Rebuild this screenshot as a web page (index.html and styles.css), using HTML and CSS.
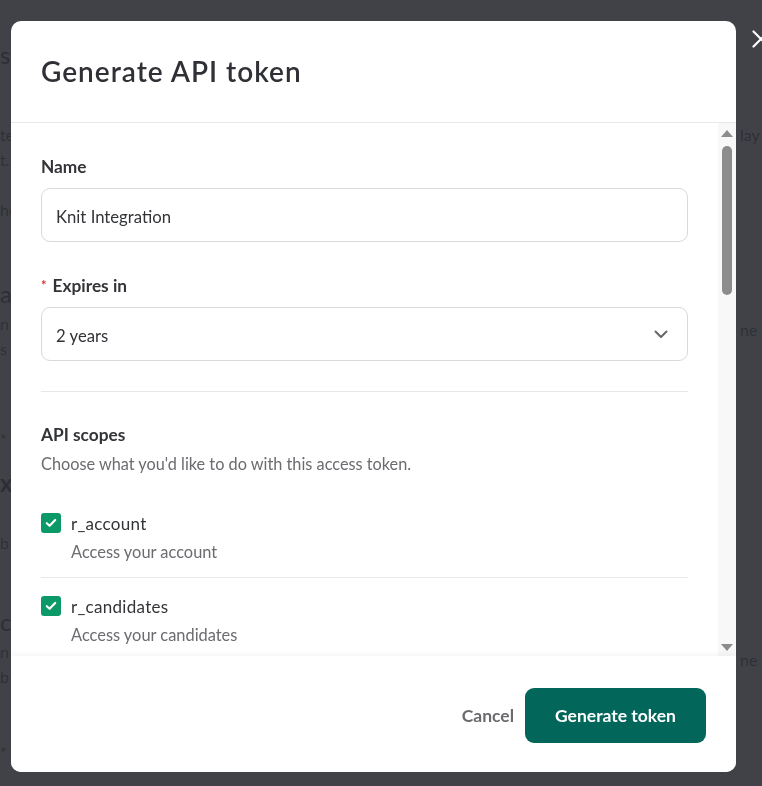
FILE: index.html
```html
<!DOCTYPE html>
<html lang="en">
<head>
<meta charset="utf-8">
<title>Generate API token</title>
<link rel="stylesheet" href="styles.css">
</head>
<body>
<div class="page">
  <div class="bg-col bg-left">
    <div class="bg-big bg-m40">ss</div>
    <div class="bg-t bg-m52">te</div>
    <div class="bg-t">t.</div>
    <div class="bg-t bg-m25">ho</div>
    <div class="bg-big bg-m57">a</div>
    <div class="bg-t bg-m2">n</div>
    <div class="bg-t">s</div>
    <div class="bg-t bg-m65">*</div>
    <div class="bg-big bg-bold bg-m17">xp</div>
    <div class="bg-t bg-m32">b</div>
    <div class="bg-big bg-m52">co</div>
    <div class="bg-t bg-m2">n</div>
    <div class="bg-t">b</div>
    <div class="bg-t bg-m50">*</div>
  </div>
  <div class="bg-col bg-right">
    <div class="bg-t bg-r1">lay</div>
    <div class="bg-t bg-r2">ne</div>
    <div class="bg-t bg-r3">ne</div>
  </div>
</div>

<div class="overlay">
  <button class="close" aria-label="Close">
    <svg width="18" height="18" viewBox="0 0 18 18"><path d="M1.5 1.5 L16.5 16.5 M16.5 1.5 L1.5 16.5" stroke="#fff" stroke-width="2.2" stroke-linecap="round" fill="none"/></svg>
  </button>
  <div class="modal">
    <header class="modal-header">
      <h1 class="modal-title">Generate API token</h1>
    </header>
    <div class="modal-body">
      <div class="scroll-content">
        <div class="field">
          <label class="label">Name</label>
          <div class="input">Knit Integration</div>
        </div>
        <div class="field">
          <label class="label"><span class="req">*</span>Expires in</label>
          <div class="input select">
            <span>2 years</span>
            <svg class="chev" width="14" height="9" viewBox="0 0 14 9"><path d="M1.5 1.5 L7 7 L12.5 1.5" stroke="#666" stroke-width="2" fill="none" stroke-linecap="round" stroke-linejoin="round"/></svg>
          </div>
        </div>
        <div class="divider"></div>
        <div class="scopes-head">
          <div class="label">API scopes</div>
          <div class="hint">Choose what you'd like to do with this access token.</div>
        </div>
        <div class="scope">
          <div class="scope-row">
            <span class="check"><svg width="12" height="10" viewBox="0 0 12 10"><path d="M1.8 5.2 L4.6 7.8 L10.2 2" stroke="#fff" stroke-width="2.2" fill="none" stroke-linecap="round" stroke-linejoin="round"/></svg></span>
            <span class="scope-name">r_account</span>
          </div>
          <div class="scope-desc">Access your account</div>
        </div>
        <div class="scope">
          <div class="scope-row">
            <span class="check"><svg width="12" height="10" viewBox="0 0 12 10"><path d="M1.8 5.2 L4.6 7.8 L10.2 2" stroke="#fff" stroke-width="2.2" fill="none" stroke-linecap="round" stroke-linejoin="round"/></svg></span>
            <span class="scope-name">r_candidates</span>
          </div>
          <div class="scope-desc">Access your candidates</div>
        </div>
      </div>
      <div class="scrollbar">
        <span class="arrow-up"></span>
        <span class="thumb"></span>
        <span class="track-fill"></span>
        <span class="arrow-down"></span>
      </div>
    </div>
    <footer class="modal-footer">
      <button class="btn-cancel">Cancel</button>
      <button class="btn-primary">Generate token</button>
    </footer>
  </div>
</div>
</body>
</html>
```

FILE: styles.css
```css
* { box-sizing: border-box; }
html, body { margin: 0; padding: 0; }
body {
  width: 762px;
  height: 786px;
  overflow: hidden;
  font-family: "Lato", "Liberation Sans", sans-serif;
  background: #ffffff;
  color: #333;
}

/* background page (dimmed) */
.page {
  display: flex;
  justify-content: space-between;
  height: 786px;
}
.bg-col { display: flex; flex-direction: column; }
.bg-left { padding-left: 0; }
.bg-right { width: 22px; padding-top: 122px; }
.bg-big { font-size: 24px; line-height: 30px; color: #333; }
.bg-bold { font-weight: 700; }
.bg-t { font-size: 16px; line-height: 25px; color: #444; }
.bg-m2 { margin-top: 2px; }
.bg-m17 { margin-top: 17px; }
.bg-m25 { margin-top: 25px; }
.bg-m32 { margin-top: 32px; }
.bg-m40 { margin-top: 40px; }
.bg-m50 { margin-top: 50px; }
.bg-m52 { margin-top: 52px; }
.bg-m57 { margin-top: 57px; }
.bg-m65 { margin-top: 65px; }
.bg-r1 { margin-bottom: 170px; }
.bg-r2 { margin-bottom: 305px; }

.overlay {
  position: fixed;
  inset: 0;
  background: rgba(44, 45, 52, 0.9);
  padding: 21px 26px 14px 11px;
}
.close {
  position: absolute;
  top: 30px;
  left: 752px;
  background: none;
  border: 0;
  padding: 0;
  line-height: 0;
}

.modal {
  width: 725px;
  height: 751px;
  background: #fff;
  border-radius: 10px;
  display: flex;
  flex-direction: column;
  overflow: hidden;
}
.modal-header {
  height: 102px;
  flex: none;
  border-bottom: 1px solid #e8e8e8;
  padding: 0 30px;
  display: flex;
  align-items: center;
}
.modal-title {
  margin: 0 0 1px;
  font-size: 28px;
  font-weight: 600;
  color: #303136;
  letter-spacing: 1px;
}

.modal-body {
  flex: 1;
  display: flex;
  min-height: 0;
}
.scroll-content {
  flex: 1;
  min-width: 0;
  overflow: hidden;
  padding: 34px 30px 0 30px;
}
.field { display: flex; flex-direction: column; margin-bottom: 33px; }
.label {
  font-size: 17.3px;
  line-height: 20px;
  font-weight: 700;
  color: #333438;
  margin-bottom: 11px;
}
.req { color: #d9352b; font-size: 13px; margin-right: 6px; vertical-align: 2px; }
.input {
  height: 54px;
  border: 1px solid #d9d9d9;
  border-radius: 9px;
  padding: 3px 14px 0;
  display: flex;
  align-items: center;
  font-size: 16.7px;
  color: #333438;
}
.select { justify-content: space-between; padding-right: 19px; }
.chev { margin-top: -2px; }

.divider { height: 1px; background: #e8e8e8; margin-top: -3px; }

.scopes-head { padding-top: 33px; }
.scopes-head .label { margin-bottom: 9px; }
.hint { font-size: 16.3px; line-height: 20px; color: #6b6b70; }

.scope {
  padding: 18px 0 15px;
  border-bottom: 1px solid #e8e8e8;
}
.scope:last-child { border-bottom: 0; }
.scopes-head + .scope { padding-top: 39px; border-bottom: 1px solid #e8e8e8; }
.scope-row { display: flex; align-items: center; gap: 10px; height: 20px; }
.check {
  width: 20px;
  height: 20px;
  border-radius: 3px;
  background: #0b9968;
  display: flex;
  align-items: center;
  justify-content: center;
}
.scope-name { font-size: 17px; letter-spacing: 0.3px; color: #333438; }
.scope-desc { font-size: 16.4px; line-height: 20px; color: #6b6b70; margin: 9px 0 0 30px; }

.scrollbar {
  flex: none;
  width: 18px;
  background: #f8f8f8;
  display: flex;
  flex-direction: column;
  align-items: center;
  padding: 7px 0 5px;
}
.arrow-up, .arrow-down {
  width: 0; height: 0;
  border-left: 6px solid transparent;
  border-right: 6px solid transparent;
}
.arrow-up { border-bottom: 7px solid #8c8c8c; }
.arrow-down { border-top: 7px solid #8c8c8c; }
.thumb {
  width: 10px;
  height: 149px;
  border-radius: 5px;
  background: #8c8c8c;
  margin-top: 9px;
}
.track-fill { flex: 1; }

.modal-footer {
  height: 116px;
  flex: none;
  display: flex;
  align-items: center;
  justify-content: flex-end;
  gap: 11px;
  padding: 3px 30px 0;
  box-shadow: 0 -3px 6px rgba(0,0,0,0.035);
  position: relative;
  background: #fff;
}
.btn-cancel {
  background: none;
  border: 0;
  padding: 0;
  font-family: inherit;
  font-size: 17.5px;
  font-weight: 700;
  color: #6b6b70;
}
.btn-primary {
  height: 55px;
  width: 181px;
  border: 0;
  border-radius: 9px;
  background: #02675a;
  color: #fff;
  font-family: inherit;
  font-size: 17.5px;
  font-weight: 700;
}
```
